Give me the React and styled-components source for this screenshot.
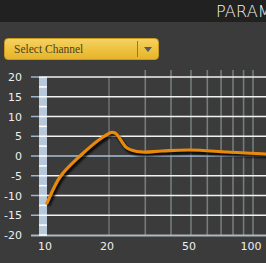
import React from 'react'
import styled, { createGlobalStyle } from 'styled-components'

const GlobalStyle = createGlobalStyle`
  html, body {
    margin: 0;
    padding: 0;
    background: #3b3b3b;
  }
`

const Page = styled.div`
  width: 266px;
  height: 263px;
  overflow: hidden;
  background: #3b3b3b;
  display: flex;
  flex-direction: column;
`

const Header = styled.div`
  height: 22px;
  background: #212121;
  padding-left: 216px;
  display: flex;
  align-items: center;
  overflow: hidden;
  white-space: nowrap;
  font-family: 'DejaVu Sans', sans-serif;
  font-weight: 300;
  font-size: 16px;
  color: #f4f4f4;
  letter-spacing: 0.2px;
`

const Select = styled.div`
  margin: 16px 0 0 4px;
  width: 155px;
  height: 22px;
  box-sizing: border-box;
  border: 1px solid #c99a1c;
  border-radius: 4px;
  background: linear-gradient(#f4d263 0%, #efc444 45%, #e6b42a 100%);
  display: flex;
  align-items: stretch;
`

const SelectLabel = styled.span`
  flex: 1;
  padding-left: 9px;
  display: flex;
  align-items: center;
  font-family: 'Liberation Serif', 'DejaVu Serif', serif;
  font-size: 11.5px;
  color: #4d4222;
`

const SelectButton = styled.span`
  width: 20px;
  border-left: 1px solid #9c7a22;
  margin: 2px 0;
  display: flex;
  align-items: center;
  justify-content: center;
  &::after {
    content: '';
    border-left: 4px solid transparent;
    border-right: 4px solid transparent;
    border-top: 5px solid #555a60;
  }
`

const Chart = styled.svg`
  display: block;
  margin-top: 10px;
  font-family: 'DejaVu Sans', sans-serif;
`

const fx = f => 47 + 206 * Math.log10(f / 10)
const dy = d => 86 - d * 3.95

const points = [
  [47, 133], [60, 107], [80, 86], [103, 67], [115, 63], [127, 78],
  [142, 82], [162, 81], [190, 80], [228, 82], [266, 84], [280, 84],
]

function smoothPath(pts) {
  let d = `M${pts[0][0]},${pts[0][1]}`
  for (let i = 0; i < pts.length - 1; i++) {
    const p0 = pts[i - 1] || pts[i]
    const p1 = pts[i]
    const p2 = pts[i + 1]
    const p3 = pts[i + 2] || p2
    const c1 = [p1[0] + (p2[0] - p0[0]) / 6, p1[1] + (p2[1] - p0[1]) / 6]
    const c2 = [p2[0] - (p3[0] - p1[0]) / 6, p2[1] - (p3[1] - p1[1]) / 6]
    d += ` C${c1[0]},${c1[1]} ${c2[0]},${c2[1]} ${p2[0]},${p2[1]}`
  }
  return d
}

const dbLines = [20, 15, 10, 5, 0, -5, -10, -15, -20]
const freqLines = [30, 40, 50, 60, 70, 80, 90, 100]
const freqLabels = [10, 20, 50, 100]

function EqChart() {
  const curve = smoothPath(points)
  const ticks = []
  for (let d = 20; d >= -20; d -= 2.5) ticks.push(d)

  return (
    <Chart width="266" height="193" viewBox="0 0 266 193">
      <defs>
        <filter id="blur" x="-10%" y="-20%" width="120%" height="140%">
          <feGaussianBlur stdDeviation="1.2" />
        </filter>
      </defs>

      <line x1={fx(20)} y1="7" x2={fx(20)} y2="165" stroke="#8a8a8a" strokeWidth="1" />
      {freqLines.map(f => (
        <line key={f} x1={fx(f)} y1="-2" x2={fx(f)} y2="165" stroke="#737d7a" strokeWidth="1.6" />
      ))}

      {dbLines.slice(0, -1).map(d => (
        <g key={d}>
          <line x1="31" y1={dy(d)} x2="39" y2={dy(d)} stroke="#9fb6cc" strokeWidth="1.5" />
          <line x1="47" y1={dy(d)} x2="266" y2={dy(d)} stroke={d === 0 ? '#a9c2da' : '#f2f2f2'} strokeWidth="1.5" />
        </g>
      ))}
      <line x1="31" y1="165.5" x2="266" y2="165.5" stroke="#aeb8c2" strokeWidth="2" />

      <rect x="39" y="7" width="8" height="159" fill="#b7c8da" />
      {ticks.map(d => (
        <rect key={d} x="39" y={dy(d) - 0.75} width="8" height="1.5" fill="#ffffff" />
      ))}

      {dbLines.map(d => (
        <text key={d} x="22" y={dy(d) + 4} textAnchor="end" fontSize="11" fill="#eeeeee">{d}</text>
      ))}
      {freqLabels.map(f => (
        <text key={f} x={fx(f) - 2} y="180" textAnchor="middle" fontSize="11" fill="#eeeeee">{f}</text>
      ))}

      <path d={curve} transform="translate(1.5,2.5)" fill="none" stroke="#000" strokeWidth="3.5" strokeOpacity="0.85" filter="url(#blur)" />
      <path d={curve} fill="none" stroke="#e98a0b" strokeWidth="3.2" strokeLinecap="round" />
    </Chart>
  )
}

export default function App() {
  return (
    <>
      <GlobalStyle />
      <Page>
        <Header>PARAMETERS</Header>
        <Select>
          <SelectLabel>Select Channel</SelectLabel>
          <SelectButton />
        </Select>
        <EqChart />
      </Page>
    </>
  )
}
